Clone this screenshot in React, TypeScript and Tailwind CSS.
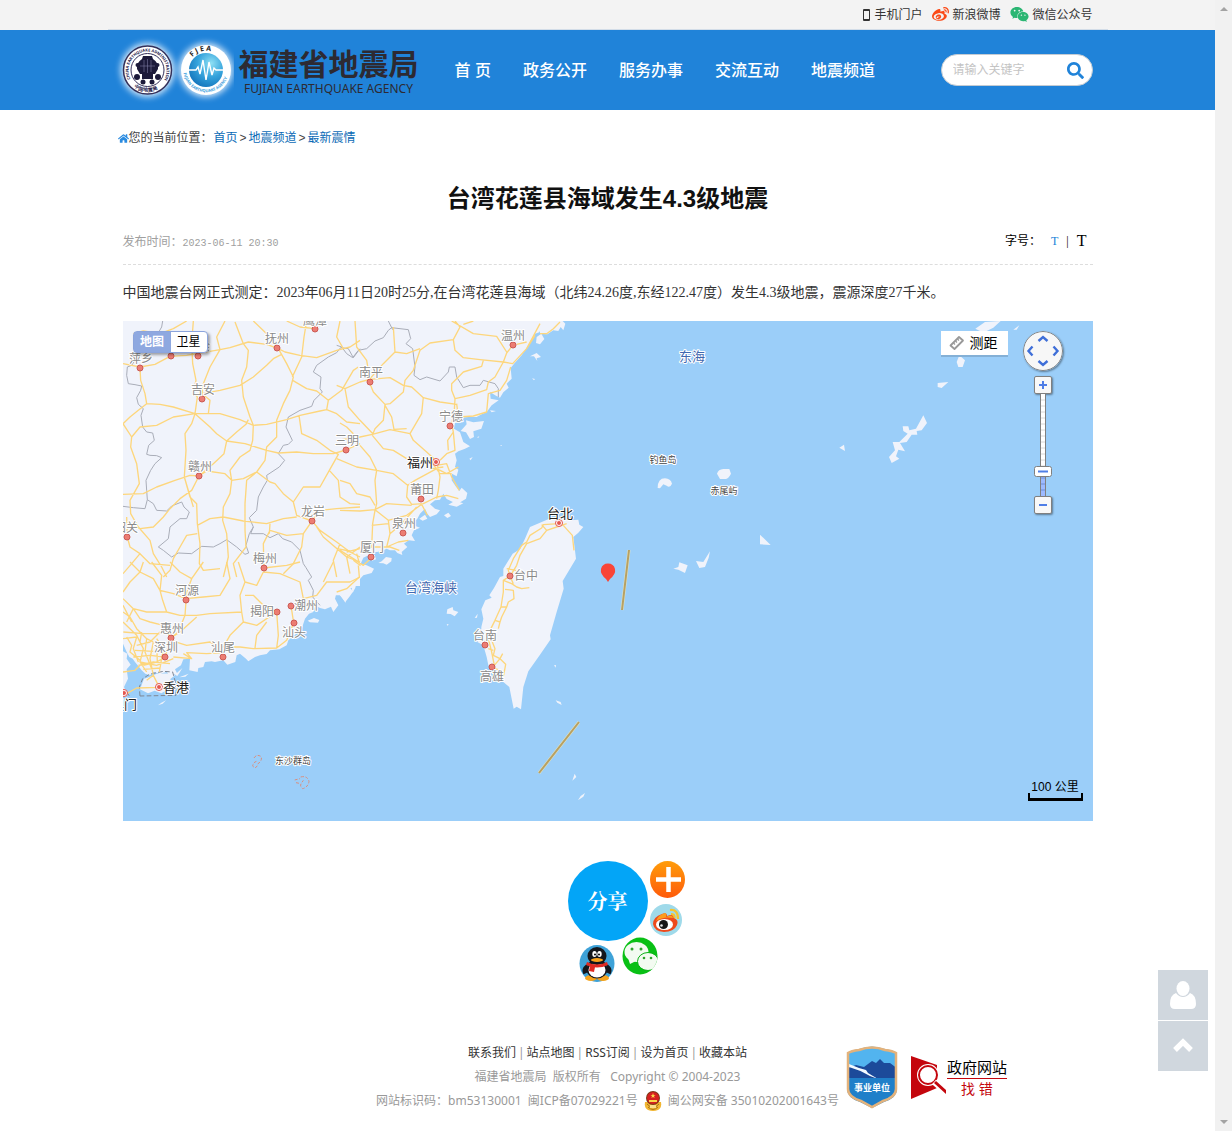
import { useState } from 'react';
import { FaHome, FaSearch, FaWeibo, FaWeixin } from 'react-icons/fa';
import { ChevronUp } from 'lucide-react';

const NAV = ['首 页', '政务公开', '服务办事', '交流互动', '地震频道'];
const FOOTER_LINKS = ['联系我们', '站点地图', 'RSS订阅', '设为首页', '收藏本站'];

// 地图图块：坐标为 3 倍精度，各自带偏移
const MAINLAND =
  'M0,12 L600,12 606,30 598,46 585,50 570,75 560,92 545,115 524,138 512,153 515,185 500,200 506,212 490,226 480,242 468,236 450,225 452,245 476,250 455,265 440,285 425,292 410,300 385,300 366,302 360,315 345,318 342,335 360,346 370,375 390,388 375,395 355,403 345,410 350,430 345,450 355,458 350,478 336,470 335,490 347,508 358,522 365,512 382,528 378,545 362,555 350,565 340,556 320,546 310,530 300,548 285,550 270,562 285,575 300,580 290,592 270,600 262,590 255,575 240,590 232,605 225,612 220,625 240,632 222,640 215,655 225,672 206,670 192,680 202,690 185,705 187,714 172,708 165,700 150,700 140,695 130,700 112,705 92,705 85,715 70,722 62,740 80,745 102,755 95,768 70,775 50,797 46,812 38,827 35,812 22,820 15,830 17,858 8,845 0,835 -651,835 -651,12Z';
const SOUTH_COAST =
  'M9,0 L720,0 720,72 702,72 690,78 700,88 690,102 676,120 665,105 650,90 645,110 655,130 640,150 633,134 615,142 600,138 585,130 580,150 567,155 555,170 550,185 545,202 525,218 505,235 500,250 478,262 450,265 440,276 420,280 405,285 385,298 378,290 360,275 350,280 346,300 322,308 310,295 285,300 275,298 255,300 250,315 235,318 233,330 208,325 210,290 190,292 183,310 165,322 172,335 150,340 140,330 120,335 100,330 90,340 76,335 65,325 55,312 45,300 38,290 28,285 20,270 9,245Z M9,268 L22,275 20,290 32,308 20,322 24,350 12,375 20,395 9,400Z M60,382 L72,350 88,345 110,335 150,334 165,340 150,352 165,362 178,375 140,385 124,394 104,386 84,394Z M165,338 L187,318 180,330 172,342Z M178,346 L206,335 196,344Z M114,430 L124,422 138,415 128,425Z M563,176 L582,168 598,174 594,182 570,181Z';
const TAIWAN =
  'M570,75 L600,62 640,45 690,55 715,53 718,68 730,75 715,92 700,105 708,170 690,200 668,237 671,260 650,330 630,400 632,412 600,458 565,508 550,555 543,622 530,614 521,620 515,590 508,555 490,540 470,505 445,490 440,465 430,430 412,420 424,405 424,375 430,350 424,322 436,295 455,287 448,280 462,258 480,225 490,222 490,200 518,155 540,142 555,110Z';
const STRAIT_ISLETS =
  'M115,183 L125,178 138,165 155,168 154,178 140,188 130,184Z M320,335 L322,322 338,315 340,325 355,330 344,343 332,336Z M404,348 L413,335 411,347Z M320,366 L326,367 323,372Z M642,490 L648,489 647,497Z M647,595 L662,600 665,609 652,602Z M697,836 L704,815 709,825Z M714,895 L722,882 735,873 730,884Z M325,8 L345,-4 370,4 350,14Z M312,40 L325,32 333,42 322,48Z M238,50 L255,38 262,50 248,56Z M92,162 L104,158 108,172 96,176Z';
const NORTH_ISLETS =
  'M570,118 L590,108 603,120 590,124 592,132 582,118Z M590,60 L604,50 613,66 600,82 588,78Z M600,50 L622,52 640,40 655,42 662,30 670,40 676,20 668,12 600,12Z M576,184 L585,186 582,190Z M362,342 L380,322 378,310 400,316 432,312 424,335 400,343 402,360 390,366 378,346Z M412,360 L418,358 414,364Z M480,384 L486,384 484,387Z M388,425 L398,420 392,430Z M450,280 L468,282 455,286Z';
const EAST_ISLETS =
  'M1006,35 L1035,15 1082,12 1060,32 1040,42 1020,42Z M1120,38 L1138,25 1130,38Z M958,115 L975,130 968,150 955,150 950,135Z M893,198 L925,195 905,213 893,210Z M850,295 L861,318 845,340 830,342 832,353 815,353 800,375 780,378 795,403 775,398 768,418 778,425 755,438 747,420 765,400 758,375 778,375 803,350 790,342 788,328 805,328 808,340 828,335Z M598,392 L612,383 615,402Z M231,470 Q235,457 250,456 L268,456 273,470 Q265,486 256,486 L240,486Z M53,513 Q53,484 75,484 Q92,485 96,500 Q90,514 80,506 L70,502 60,514Z M360,653 L392,684 360,682Z M210,703 L206,722 195,750 178,753 168,732 190,735Z M100,755 L115,750 118,736 143,745 135,768 115,758Z';

const ROADS_NW =
  'M9,140 L60,150 105,142 150,118 200,115 300,98 330,92 385,75 440,82 475,95 495,105 540,115 590,122 650,100 690,90 720,70 M60,153 L62,190 75,230 80,260 55,280 30,300 9,320 35,360 32,390 50,440 58,500 30,550 32,590 55,630 90,670 100,710 125,750 140,780 M80,260 L120,262 160,270 225,290 300,290 360,308 400,325 440,322 500,308 540,295 600,282 620,278 650,290 680,315 720,320 M225,290 L215,320 195,350 198,400 193,480 205,520 220,570 M225,290 L270,330 290,350 320,372 375,380 440,400 475,408 530,405 580,410 640,410 678,399 720,380 M225,290 L160,300 110,325 60,330 35,360 M40,50 L70,42 120,50 160,35 200,12 M220,12 L215,80 218,140 228,190 220,225 232,240 225,290 M315,12 L290,60 300,98 270,150 250,200 246,230 270,250 265,290 M345,15 L370,80 385,100 380,150 365,190 370,240 390,300 400,325 398,370 390,400 360,420 330,460 335,490 330,530 310,570 308,610 320,650 325,720 310,780 M385,308 L378,322 350,345 320,372 312,410 280,440 237,477 M246,230 L300,220 360,205 400,180 440,145 460,125 485,112 M475,95 L500,140 520,180 510,220 490,260 470,310 470,360 440,390 435,430 410,465 380,490 375,560 375,640 378,690 340,740 350,780 M518,190 L560,215 590,222 625,250 665,220 700,160 715,150 M625,250 L620,278 M237,477 L210,475 165,490 110,510 70,530 9,532 M237,477 L260,462 315,470 335,490 370,485 410,465 450,495 465,500 490,530 520,555 530,595 576,612 M237,477 L215,520 180,545 150,575 130,600 100,630 60,635 20,620 M193,480 L210,540 230,560 232,620 240,680 238,740 250,760 300,755 M232,625 L270,605 310,600 370,612 440,620 490,605 530,600 M232,650 L200,655 180,690 160,725 150,760 130,780 M20,600 L22,660 30,690 60,710 35,740 9,770 M60,710 L90,740 150,745 M576,612 L600,640 650,675 690,705 720,720 M576,612 L600,580 650,575 720,570 M537,295 L545,350 590,370 630,400 655,412 628,460 600,510 550,510 520,555 M628,460 L655,490 660,540 690,560 720,562 M576,612 L550,650 500,655 450,640 430,680 432,752 M450,620 L448,650 M550,650 L545,690 520,740 490,770 M590,630 L610,660 680,720 720,735 M720,690 L680,720 690,770 M650,780 L640,730 660,680 M560,12 L552,60 545,120 517,180 M500,12 L540,30 585,35 M660,12 L650,60 670,95 M400,12 L440,50 475,95';
const ROADS_N =
  'M45,12 L50,90 80,130 90,190 M-10,205 L15,215 60,195 90,187 150,182 190,205 215,210 250,242 300,255 350,262 M15,215 L25,270 60,310 100,352 M90,200 L100,225 135,262 130,310 105,335 97,355 M135,262 L150,260 190,225 195,190 220,160 240,100 270,78 340,68 360,30 345,12 M340,68 L345,100 370,122 420,128 490,135 518,140 560,95 600,20 M335,12 L400,50 470,58 500,105 M370,22 L400,12 M518,85 L500,108 490,135 465,180 445,195 440,218 390,235 345,245 335,220 335,200 370,165 425,148 430,130 M-10,370 L60,360 97,352 150,338 210,350 245,290 250,240 M345,245 L343,280 335,320 340,345 345,400 320,410 300,430 M340,345 L323,370 325,400 M350,260 L355,300 400,297 440,285 445,230 480,220 500,190 512,150 M97,355 L130,395 160,400 200,425 240,430 M210,350 L220,370 260,405 290,433 M-10,425 L50,450 110,460 160,470 203,505 225,490 290,455 320,470 355,450 M203,505 L200,540 215,562 250,560 290,540 320,535 355,545 M60,385 L90,420 110,460 105,490 110,560 105,580 98,620 95,690 M0,580 L60,582 105,578 140,560 215,565 M105,578 L145,610 200,595 245,562 262,595 M145,610 L150,650 140,690 175,675 205,670 M95,625 L145,620 M150,650 L180,625 230,570 M0,490 L30,500 50,530 90,540 105,565 M160,30 L165,105 130,140 90,185 M165,105 L200,110 240,95 M600,50 L620,50 640,35 660,15 M560,95 L585,55 M290,433 L300,480 295,520 290,545 M290,445 L320,440 335,480 358,520 M275,455 L310,450 M278,440 L300,470 335,470 M20,705 L60,695 95,690 120,690 150,690 178,700 M135,265 L155,300 162,337 200,335 M0,700 L40,725 70,745 95,722 M50,710 L60,745 40,730 M55,745 L58,780 20,815 -10,825 M-10,695 L30,702 M0,318 L20,330 40,350 M560,75 L530,82';
const ROADS_SW =
  'M70,0 L60,30 30,60 9,90 M60,30 L100,50 120,85 160,95 198,110 M95,0 L125,40 120,85 128,115 140,150 180,160 230,160 270,155 365,150 M250,0 L215,50 200,90 195,160 175,210 152,228 M320,0 L330,50 300,100 250,105 198,110 M9,110 L40,140 60,170 90,180 130,190 152,228 M9,150 L30,165 50,200 80,230 100,240 M20,180 L40,140 80,150 140,150 M9,180 L50,220 70,260 60,300 80,330 M152,228 L135,285 110,300 70,310 M9,230 L50,225 40,260 55,300 M152,228 L180,210 230,165 M152,235 L200,250 270,240 290,255 360,255 400,260 470,258 500,235 520,185 M160,285 L215,290 200,272 260,275 309,272 M215,290 L190,275 M365,150 L370,180 410,190 470,150 M370,180 L330,220 310,255 M365,150 L360,100 375,60 355,0 M375,60 L410,70 430,30 M375,100 L400,100 430,130 470,150 M430,30 L480,35 540,60 550,110 513,130 M440,180 L410,220 405,258 M470,150 L475,220 470,258 M430,18 L500,10 540,0 M550,110 L590,100 620,60 690,60 720,45 M640,0 L610,60 M513,130 L521,183 M100,240 L90,290 100,340 118,376 M20,395 L50,378 118,376 M60,300 L110,310 160,290 M120,210 L90,240 50,250 M110,230 L130,260 118,330 M80,230 L75,270 95,320 M20,225 L35,250 30,270 60,295 M40,285 L90,280 135,285 M55,310 L100,300 150,305 M100,340 L80,355 M10,210 L70,215 120,215 M65,210 L60,240 M70,322 L120,318 M110,240 L112,300 M9,330 L45,325 60,310 M45,265 L100,268 M9,130 L35,180 M30,0 L60,30 M150,0 L180,30 215,50';
const ROADS_TW =
  'M658,65 L610,68 605,78 570,100 560,120 545,130 520,170 505,205 510,222 490,235 490,270 483,315 465,355 450,385 M605,68 L620,85 650,75 680,65 M620,85 L600,110 560,125 540,160 530,190 515,215 M490,235 L515,245 530,255 545,260 568,257 M495,262 L520,265 522,290 505,300 500,315 483,315 M500,315 L485,345 480,360 465,355 M480,360 L475,380 M500,200 L528,205 M510,222 L520,245 M445,410 L455,450 463,490 M455,415 L465,440 460,460 480,470 488,455 M445,440 L460,445 M463,490 L480,470 497,487 490,525 M463,500 L485,505 M665,65 L697,100 702,145';

const BORDERS_NW =
  'M128,12 L125,30 118,42 M50,105 L45,130 35,145 22,150 20,175 25,200 45,203 65,207 62,220 50,242 55,262 70,275 63,295 68,330 80,345 98,348 103,370 86,385 80,412 90,415 110,416 125,422 105,440 92,460 78,490 80,520 82,548 100,560 110,580 140,582 155,567 185,555 192,570 208,585 200,605 180,605 150,630 145,665 115,690 130,700 155,720 175,708 215,710 245,688 280,690 300,680 320,668 350,690 375,712 386,708 378,685 388,650 400,630 M9,568 L40,572 75,575 82,548 M720,95 L700,122 685,95 662,92 650,107 625,120 590,145 580,165 603,180 600,215 607,225 582,250 575,268 540,280 505,300 498,330 517,370 505,382 490,385 475,410 494,430 478,450 440,475 442,490 430,510 415,540 410,580 388,602 400,630 392,650 430,650 450,662 475,650 488,665 515,675 540,700 550,740 558,752 575,780 565,790 580,820 578,840 600,865';
const BORDERS_N =
  'M-10,85 L5,90 20,110 38,122 55,100 80,95 105,72 130,62 145,40 155,32 205,38 212,65 198,80 218,95 225,150 222,175 240,188 260,180 300,192 325,165 328,150 345,150 350,180 370,212 390,205 420,205 430,190 465,200 475,215 475,240 M145,12 L158,38';

const CITIES: [string, number, number, number, number][] = [
  ['鹰潭', 315, 323, 315, 327],
  ['抚州', 277, 341, 277, 346],
  ['萍乡', 141, 361, 140, 366],
  ['新余', 198, 349, 198, 354],
  ['吉安', 203, 392, 202, 397],
  ['赣州', 200, 469, 199, 474],
  ['韶关', 126, 530, 127, 535],
  ['三明', 347, 443, 346, 448],
  ['龙岩', 313, 514, 312, 519],
  ['梅州', 265, 561, 264, 566],
  ['南平', 371, 375, 370, 380],
  ['温州', 513, 338, 513, 343],
  ['宁德', 451, 419, 450, 424],
  ['莆田', 422, 492, 421, 497],
  ['泉州', 404, 526, 403, 531],
  ['厦门', 372, 550, 371, 555],
  ['台中', 526, 578, 510, 574],
  ['台南', 485, 638, 485, 643],
  ['高雄', 492, 679, 492, 665],
  ['河源', 187, 593, 186, 598],
  ['惠州', 172, 631, 171, 636],
  ['深圳', 166, 650, 165, 655],
  ['揭阳', 262, 614, 277, 610],
  ['潮州', 306, 608, 291, 604],
  ['汕头', 294, 635, 294, 621],
  ['汕尾', 223, 650, 223, 655],
];

const CAPITALS: [string, number, number, number, number][] = [
  ['福州', 420, 465, 436, 460],
  ['台北', 560, 516, 559, 521],
  ['香港', 176, 690, 159, 685],
  ['澳门', 124, 707, 124, 691],
];

const SEAS: [string, number, number][] = [
  ['台湾海峡', 431, 590],
  ['东海', 692, 359],
];

const ISLANDS: [string, number, number][] = [
  ['东沙群岛', 293, 762],
  ['钓鱼岛', 663, 461],
  ['赤尾屿', 724, 492],
];

function MapCanvas() {
  return (
    <svg
      className="block h-full w-full font-['Noto_Sans_CJK_SC',sans-serif]"
      viewBox="123 319 970 500"
      preserveAspectRatio="xMidYMid slice"
      role="img"
      aria-label="震中位置地图"
    >
      <rect x="123" y="319" width="970" height="500" fill="#9bcef9" />
      <g transform="translate(120 315) scale(0.333333)" strokeLinejoin="round">
        <g fill="#f0f3fb">
          <path transform="translate(660 0)" d={MAINLAND} />
          <path transform="translate(0 735)" d={SOUTH_COAST} />
          <path transform="translate(660 555)" d={TAIWAN} />
          <path transform="translate(660 555)" d={STRAIT_ISLETS} />
          <path transform="translate(660 0)" d={NORTH_ISLETS} />
          <path transform="translate(1560 0)" d={EAST_ISLETS} />
        </g>
        <g fill="none" stroke="#a9adb8" strokeWidth="3">
          <path d={BORDERS_NW} />
          <path transform="translate(660 0)" d={BORDERS_N} />
          <path
            transform="translate(0 735)"
            stroke="#7f8794"
            strokeDasharray="14 7"
            d="M60,402 L58,375 68,350 90,336 130,328 158,330 166,360 168,400 Z M20,390 L30,405"
          />
        </g>
        <g fill="none" stroke="#fdd67c" strokeWidth="4">
          <path d={ROADS_NW} />
          <path transform="translate(660 0)" d={ROADS_N} />
          <path transform="translate(0 735)" d={ROADS_SW} />
          <path transform="translate(660 555)" d={ROADS_TW} />
        </g>
        <g transform="translate(0 735)" fill="none" stroke="#d98e7c" strokeWidth="3" strokeDasharray="9 5">
          <path d="M402,588 Q410,575 424,584 Q426,598 414,605 Q408,625 398,612 Q400,600 410,598" />
          <path d="M524,654 L540,650 M528,662 L538,664 M542,645 Q562,640 567,658 Q564,676 548,680 Q538,672 544,664 L550,655" />
        </g>
      </g>

      <path d="M629,548 L622,608 M579,720 L539,771" stroke="#dfe3c4" strokeWidth="3" />
      <path d="M629,548 L622,608 M579,720 L539,771" stroke="#b7a063" strokeWidth="2" />

      <circle cx="171" cy="354" r="3" fill="#ec7d73" stroke="#cb5a55" />
      {CITIES.map(([name, , , cx, cy]) => (
        <circle key={name} cx={cx} cy={cy} r="3" fill="#ec7d73" stroke="#cb5a55" />
      ))}
      {CAPITALS.map(([name, , , cx, cy]) => (
        <g key={name}>
          <circle cx={cx} cy={cy} r="3.500" fill="#fff" stroke="#e4574f" />
          <circle cx={cx} cy={cy} r="2" fill="#e4574f" />
        </g>
      ))}

      <g textAnchor="middle" stroke="#fff" strokeWidth="2" strokeLinejoin="round" paintOrder="stroke">
        <g fontSize="12" fill="#8a8a8a">
          {CITIES.map(([name, x, y]) => (
            <text key={name} x={x} y={y}>{name}</text>
          ))}
        </g>
        <g fontSize="13" fill="#222">
          {CAPITALS.map(([name, x, y]) => (
            <text key={name} x={x} y={y}>{name}</text>
          ))}
        </g>
        <g fontSize="13" fill="#3f68b0">
          {SEAS.map(([name, x, y]) => (
            <text key={name} x={x} y={y}>{name}</text>
          ))}
        </g>
        <g fontSize="9" fill="#444">
          {ISLANDS.map(([name, x, y]) => (
            <text key={name} x={x} y={y}>{name}</text>
          ))}
        </g>
      </g>

      {/* 震中 */}
      <path d="M608,580 L606,577 Q600,572 601,567 A7.2,7.2 0 0 1 615,567 Q616,572 610,577Z" fill="#f94538" />
    </svg>
  );
}

function QuakeMap() {
  const [zoom, setZoom] = useState(6);
  const zoomButton =
    'flex size-[18px] items-center justify-center rounded-xs border border-[#808080] bg-[#f8f8f8] shadow-[1px_1px_2px_rgba(0,0,0,0.4)]';

  return (
    <div className="relative h-[500px] w-full overflow-hidden">
      <MapCanvas />

      <div className="absolute top-[10px] left-[10px] flex h-[22px] rounded-sm border border-[#8ba4dc] bg-white text-xs leading-[18px] shadow-[2px_2px_3px_rgba(0,0,0,0.35)]">
        <button type="button" className="w-[37px] bg-[#8ea8e0] font-bold text-white">地图</button>
        <button type="button" className="w-9 text-black">卫星</button>
      </div>

      <button
        type="button"
        className="absolute top-[10px] right-[85px] flex h-6 items-center gap-[5px] bg-white pr-[10px] pl-2 text-sm text-black shadow-[0_2px_0_#84b0d6]"
      >
        <svg className="size-4" viewBox="0 0 16 16" fill="none" stroke="#999" strokeLinejoin="round">
          <path d="M1.500,10.500 L10,2 14,5.500 5.500,14Z" strokeWidth="1.800" />
          <path d="M4.500,8 L6,9.500 M6.500,6 L8,7.500 M8.500,4 L10,5.500" strokeWidth="1.200" />
        </svg>
        测距
      </button>

      <div className="absolute top-[10px] right-[30px] flex w-10 flex-col items-center">
        <svg className="size-10 rounded-full shadow-[1px_1px_2px_rgba(0,0,0,0.4)]" viewBox="0 0 40 40">
          <circle cx="20" cy="20" r="19.5" fill="#f7f7f7" stroke="#808080" />
          <path
            d="M15.5,10 L20,6 24.5,10 M15.5,30 L20,34 24.5,30 M9.500,15.500 L5.500,20 9.500,24.500 M30.500,15.500 L34.500,20 30.500,24.500"
            fill="none"
            stroke="#3f6fd8"
            strokeWidth="2.4"
          />
        </svg>
        <button type="button" aria-label="放大" className={`${zoomButton} mt-[5px]`} onClick={() => setZoom(zoom + 1)}>
          <svg className="size-2" viewBox="0 0 8 8">
            <path d="M0,4 H8 M4,0 V8" stroke="#4f7ee6" strokeWidth="2" />
          </svg>
        </button>
        <div className="relative flex h-[102px] w-[18px] justify-center">
          <svg className="h-full w-[6px]" viewBox="0 0 6 102">
            <rect width="6" height="102" fill="#808080" />
            <rect x="1" width="4" height="78" fill="#fff" />
            <rect x="1" y="78" width="4" height="24" fill="#9dbaff" />
            <path
              d="M1,6 H5 M1,12 H5 M1,18 H5 M1,24 H5 M1,30 H5 M1,36 H5 M1,42 H5 M1,48 H5 M1,54 H5 M1,60 H5 M1,66 H5 M1,72 H5"
              stroke="#d8d8d8"
            />
            <path d="M1,84 H5 M1,90 H5 M1,96 H5" stroke="#6f8fd8" />
          </svg>
          <svg className="absolute top-[72px] left-0 h-[11px] w-[18px]" viewBox="0 0 18 11">
            <rect x="0.5" y="0.5" width="17" height="10" rx="2" fill="#fff" stroke="#808080" />
            <path d="M4,5.500 H14" stroke="#4f7ee6" strokeWidth="2" />
          </svg>
          <input
            type="range"
            min={3}
            max={19}
            value={zoom}
            aria-label="缩放级别"
            onChange={(e) => setZoom(Number(e.target.value))}
            className="absolute inset-0 h-full w-full opacity-0 [direction:rtl] [writing-mode:vertical-lr]"
          />
        </div>
        <button type="button" aria-label="缩小" className={zoomButton} onClick={() => setZoom(zoom - 1)}>
          <svg className="size-2" viewBox="0 0 8 8">
            <path d="M0,4 H8" stroke="#4f7ee6" strokeWidth="2" />
          </svg>
        </button>
      </div>

      <div className="absolute right-[10px] bottom-5 flex w-[55px] flex-col items-center text-xs leading-3 text-black">
        100 公里
        <div className="h-2 w-full border-x-2 border-b-3 border-black" />
      </div>
    </div>
  );
}

function Emblems() {
  return (
    <svg className="h-[70px] w-[122px]" viewBox="112 35 122 70">
      <defs>
        <filter id="glow" x="-40%" y="-40%" width="180%" height="180%">
          <feGaussianBlur stdDeviation="3" />
        </filter>
        <path id="ringTop" d="M130.500,79 A19,19 0 1 1 164.500,79" />
        <path id="ringBottom" d="M134,87 A22,22 0 0 0 161,87" />
        <path id="fjTop" d="M189,62 A18.500,18.500 0 0 1 223,62" />
        <path id="fjBottom" d="M183.500,73 A22.800,22.800 0 0 0 228.500,73" />
        <radialGradient id="globe" cx="0.65" cy="0.3" r="0.8">
          <stop offset="0" stopColor="#8fe0f4" />
          <stop offset="0.5" stopColor="#35a3dc" />
          <stop offset="1" stopColor="#1170b8" />
        </radialGradient>
      </defs>
      <g fill="#fff" filter="url(#glow)" opacity="0.8">
        <circle cx="147.500" cy="70" r="27" />
        <circle cx="206" cy="70" r="27" />
      </g>
      <circle cx="147.500" cy="70" r="24" fill="#fff" stroke="#33305a" strokeWidth="1.500" />
      <circle cx="147.500" cy="70" r="16.500" fill="none" stroke="#33305a" strokeWidth="1" />
      <g fill="#26234e" className="font-['Noto_Sans',sans-serif]">
        <text fontSize="4" fontWeight="700">
          <textPath href="#ringTop">CHINA EARTHQUAKE ADMINISTRATION</textPath>
        </text>
        <text fontSize="5" fontWeight="700">
          <textPath href="#ringBottom">中国地震局</textPath>
        </text>
      </g>
      {/* 候风地动仪 */}
      <g fill="#1c1a3a">
        <path d="M143,56 H152 L153,59 Q159,63 158,69 L155,74 H140 L137,69 Q136,63 142,59Z" />
        <rect x="142" y="74" width="11" height="5" />
        <circle cx="137.500" cy="65" r="2" />
        <circle cx="157.500" cy="65" r="2" />
        <circle cx="137" cy="77" r="3" />
        <circle cx="158" cy="77" r="3" />
        <circle cx="143" cy="82" r="2.500" />
        <circle cx="152" cy="82" r="2.500" />
      </g>
      <path d="M144,60 V72 M147.500,59 V73 M151,60 V72 M140,66 H155" stroke="#8b88b0" strokeWidth="0.500" />
      <circle cx="206" cy="70" r="25" fill="#fff" />
      <circle cx="206" cy="70" r="17" fill="url(#globe)" />
      <path
        d="M188,70 H196 L198,67 200,74 203,60 206,80 209,62 212,75 214,68 216,70 H224"
        fill="none"
        stroke="#fff"
        strokeWidth="1.400"
      />
      <g className="font-['Noto_Sans',sans-serif]">
        <text fontSize="7" fontWeight="700" fill="#222">
          <textPath href="#fjTop" startOffset="6">F J E A</textPath>
        </text>
        <text fontSize="4" fontWeight="700" fill="#3b9ddb">
          <textPath href="#fjBottom">FUJIAN EARTHQUAKE AGENCY</textPath>
        </text>
      </g>
    </svg>
  );
}

function Header() {
  return (
    <header>
      <div className="bg-[#f3f3f3]">
        <div className="mx-auto flex h-[30px] max-w-[1000px] items-center justify-end gap-[10px] border-b border-[#d3dde8] pr-[15px] text-xs text-[#333]">
          <a href="#mobile" className="flex items-center gap-1">
            <svg className="h-3 w-[7px]" viewBox="0 0 7 12">
              <path d="M1,0 H6 Q7,0 7,1 V11 Q7,12 6,12 H1 Q0,12 0,11 V1 Q0,0 1,0Z M1,2 V10 H6 V2Z" fill="#333" fillRule="evenodd" />
            </svg>
            手机门户
          </a>
          <a href="#weibo" className="flex items-center gap-[3px]">
            <FaWeibo className="size-[17px] text-[#fb4a17]" />
            新浪微博
          </a>
          <a href="#weixin" className="flex items-center gap-[3px]">
            <FaWeixin className="size-[19px] text-[#2bb673]" />
            微信公众号
          </a>
        </div>
      </div>

      <div className="bg-[#2083d9]">
        <div className="mx-auto flex h-20 max-w-[1000px] items-center pr-[15px] pl-1">
          <a href="#home" className="flex shrink-0 items-center gap-[5px]">
            <Emblems />
            <span className="flex flex-col items-center pt-[2px] text-[#2d2a32]">
              <span className="text-[30px] leading-9 font-bold">福建省地震局</span>
              <span className="font-['Noto_Sans',sans-serif] text-xs leading-3">FUJIAN EARTHQUAKE AGENCY</span>
            </span>
          </a>
          <nav className="ml-9 flex gap-8 pt-[2px] text-base font-medium text-white">
            {NAV.map((item) => (
              <a key={item} href="#nav" className="whitespace-nowrap">{item}</a>
            ))}
          </nav>
          <form className="ml-auto flex h-8 w-[152px] items-center rounded-full border border-[#c3cbd3] bg-white pr-2 pl-[11px]">
            <input
              type="text"
              aria-label="搜索"
              placeholder="请输入关键字"
              className="min-w-0 flex-1 text-xs outline-none placeholder:text-[#c4c4c4]"
            />
            <button type="submit" aria-label="搜索">
              <FaSearch className="size-[17px] text-[#2083d9]" />
            </button>
          </form>
        </div>
      </div>
    </header>
  );
}

function ShareWheel() {
  return (
    <div className="relative mx-auto mt-10 size-20">
      <button
        type="button"
        className="size-20 rounded-full bg-[#03a5f7] font-['Noto_Serif_CJK_SC','Noto_Sans_CJK_SC',serif] text-xl font-bold text-white"
      >
        分享
      </button>

      <button type="button" aria-label="更多" className="absolute top-0 left-[82px]">
        <svg className="h-[37px] w-[35px]" viewBox="0 0 35 37">
          <defs>
            <linearGradient id="more" x1="0" y1="0" x2="0" y2="1">
              <stop offset="0" stopColor="#ff9d0a" />
              <stop offset="1" stopColor="#fe5a0a" />
            </linearGradient>
          </defs>
          <ellipse cx="17.500" cy="18.500" rx="17.500" ry="18.500" fill="url(#more)" />
          <path d="M6,18.500 H31 M18.500,6 V31" stroke="#fff" strokeWidth="4.500" />
        </svg>
      </button>

      <button type="button" aria-label="新浪微博" className="absolute top-[43px] left-[82px]">
        <svg className="size-8" viewBox="0 0 32 32">
          <circle cx="16" cy="16" r="16" fill="#9fdaea" />
          <path d="M3,20 Q3,13 12,10 Q17,8 17,12 Q24,9 24,14 Q29,16 27,21 Q24,28 14,28 Q4,27 3,20Z" fill="#ee4a1c" />
          <path d="M6,17 Q8,11 15,9 Q17,9 16,13 Q23,10 23,14 Q14,12 6,17Z" fill="#fb9d1e" />
          <ellipse cx="14.500" cy="20.500" rx="8.500" ry="5.500" fill="#fff" />
          <circle cx="13.500" cy="20.500" r="4.500" fill="#161616" />
          <circle cx="11.500" cy="21.500" r="1.300" fill="#e8e8e8" />
          <path d="M20,6 Q28,5 28,15 M21,10 Q25,10 24.500,14" fill="none" stroke="#f4c431" strokeWidth="2.200" />
        </svg>
      </button>

      <button type="button" aria-label="微信" className="absolute top-[76px] left-[54px]">
        <svg className="h-[38px] w-[36px]" viewBox="0 0 36 38">
          <defs>
            <clipPath id="wxClip">
              <ellipse cx="18" cy="19" rx="17.500" ry="18.500" />
            </clipPath>
          </defs>
          <ellipse cx="18" cy="19" rx="17.500" ry="18.500" fill="#09c015" />
          <g clipPath="url(#wxClip)" fill="#f3fbf1">
            <ellipse cx="14.500" cy="15" rx="12" ry="10" />
            <path d="M6,21 L8,27 14,24Z" />
            <ellipse cx="26" cy="24.500" rx="10.500" ry="9" stroke="#09b015" />
            <path d="M30,31 L34,35 33,29Z" />
            <g fill="#2da52c">
              <circle cx="10" cy="12" r="1.500" />
              <circle cx="19" cy="12" r="1.500" />
              <circle cx="22" cy="21" r="1.300" />
              <circle cx="29" cy="21" r="1.300" />
            </g>
          </g>
        </svg>
      </button>

      <button type="button" aria-label="QQ" className="absolute top-[84px] left-[11px]">
        <svg className="h-[37px] w-[36px]" viewBox="0 0 36 37">
          <ellipse cx="18" cy="18.500" rx="17.500" ry="18.500" fill="#3ea2d8" />
          <path d="M8,20 Q3,24 5,28 L9,26 M28,20 Q33,24 31,28 L27,26" fill="#14171c" stroke="#14171c" strokeWidth="2" />
          <ellipse cx="12" cy="33" rx="6" ry="3" fill="#f6a41c" />
          <ellipse cx="24" cy="33" rx="6" ry="3" fill="#f6a41c" />
          <ellipse cx="18" cy="24" rx="10.500" ry="9.500" fill="#14171c" />
          <ellipse cx="18" cy="25" rx="8.500" ry="7.500" fill="#fff" />
          <ellipse cx="18" cy="11" rx="9.500" ry="9" fill="#14171c" />
          <ellipse cx="15.500" cy="9" rx="2.200" ry="3" fill="#fff" />
          <ellipse cx="20.500" cy="9" rx="2.200" ry="3" fill="#fff" />
          <circle cx="16" cy="9.500" r="1" />
          <circle cx="20" cy="9.500" r="1" />
          <ellipse cx="18" cy="15" rx="6" ry="1.900" fill="#f9a21b" />
          <path d="M8,17 Q18,22 28,17 L29,20 Q18,25 7,20Z" fill="#e02a22" />
          <path d="M11,21 L16,22 15,27 10,26Z" fill="#e02a22" />
        </svg>
      </button>
    </div>
  );
}

function PoliceBadge() {
  return (
    <svg className="h-5 w-[18px]" viewBox="0 0 18 20">
      <path d="M1,11 Q0,17 4,19 Q9,21 14,19 Q18,17 17,11Z" fill="#f2b632" />
      <path d="M3,13 Q9,20 15,13 M4,16 Q9,21 14,16" fill="none" stroke="#a8741a" />
      <circle cx="9" cy="7" r="7" fill="#7b3a16" />
      <circle cx="9" cy="7" r="6" fill="#d6201f" />
      <path d="M9,2 L9.700,4 H11.500 L10,5 10.600,7 9,6 7.400,7 8,5 6.500,4 H8.300Z M5,9 H13 V11 H5Z" fill="#f9d648" />
      <rect x="6" y="14" width="6" height="3" fill="#fbe08b" />
    </svg>
  );
}

function InstitutionShield() {
  return (
    <svg className="h-16 w-[52px]" viewBox="0 0 52 64">
      <defs>
        <clipPath id="shield">
          <path d="M1,8 Q5,5 13,4 Q26,-1 39,4 Q47,5 51,8 V44 Q51,53 38,57 L26,63 14,57 Q1,53 1,44Z" />
        </clipPath>
      </defs>
      <g clipPath="url(#shield)">
        <rect width="52" height="34" fill="#52b4ef" />
        <path d="M0,24 L10,20 18,22 26,16 30,18 34,14 38,18 44,18 52,24 V34 H0Z" fill="#1c4a9a" />
        <path d="M3,19 Q12,23 20,25 L22,28 32,34 24,31 Q14,25 3,22Z" fill="#f5fbff" />
        <rect y="33" width="52" height="31" fill="#1f7fc9" />
      </g>
      <path
        d="M2,8 Q5,6 13,5 Q26,0 39,5 Q47,6 50,8 V44 Q50,52 37,56 L26,62 15,56 Q2,52 2,44Z"
        fill="none"
        stroke="#e3b27b"
        strokeWidth="2.500"
      />
      <text x="26" y="46" textAnchor="middle" fontSize="9" fontWeight="700" fill="#fff">事业单位</text>
    </svg>
  );
}

function Footer() {
  return (
    <footer className="mt-[100px] grid grid-cols-[1fr_auto_1fr] items-start font-['Noto_Sans','Noto_Sans_CJK_SC',sans-serif] text-xs leading-6 text-[#999]">
      <div className="col-start-2 flex flex-col items-center whitespace-nowrap">
        <p>
          {FOOTER_LINKS.map((link, i) => (
            <span key={link}>
              {i > 0 && <span className="px-[2px]">|</span>}
              <a href="#link" className="text-[#333]">{link}</a>
            </span>
          ))}
        </p>
        <p>福建省地震局&nbsp; 版权所有 &nbsp; Copyright © 2004-2023</p>
        <p className="flex items-center gap-[6px]">
          <span>网站标识码：bm53130001 &nbsp;闽ICP备07029221号</span>
          <PoliceBadge />
          <a href="#beian">闽公网安备 35010202001643号</a>
        </p>
      </div>
      <div className="flex items-center gap-3 pt-1 pl-[7px]">
        <a href="#institution" aria-label="事业单位">
          <InstitutionShield />
        </a>
        <a href="#report" className="flex items-center gap-px text-sm text-black">
          <svg className="h-11 w-9" viewBox="0 0 36 44">
            <path d="M1,1 L27,10 V33 L1,44Z" fill="#c4060d" />
            <circle cx="18" cy="20" r="11" fill="#fff" />
            <circle cx="18" cy="20" r="9" fill="none" stroke="#c4060d" strokeWidth="2" />
            <path d="M24,27 L38,39" stroke="#fff" strokeWidth="6" />
            <path d="M25,27 L37,38" stroke="#c4060d" strokeWidth="3" />
          </svg>
          <span className="flex flex-col items-center">
            <span className="border-b border-[#c4060d] text-[15px] leading-[22px]">政府网站</span>
            <span className="leading-5 text-[#c4060d]">找 错</span>
          </span>
        </a>
      </div>
    </footer>
  );
}

export default function App() {
  return (
    <div className="flex min-h-screen bg-white font-['Liberation_Sans','Noto_Sans_CJK_SC',sans-serif]">
      <div className="min-w-0 flex-1">
        <Header />

        <main className="mx-auto max-w-[1000px]">
          <div className="flex items-center px-[10px] pt-[18px] text-xs leading-5 text-[#444]">
            <FaHome className="size-[11px] text-[#2a8be0]" />
            <span>您的当前位置：</span>
            <a href="#home" className="pl-px text-[#0a6ab6]">首页</a>
            <span className="px-[2px]">&gt;</span>
            <a href="#channel" className="text-[#0a6ab6]">地震频道</a>
            <span className="px-[2px]">&gt;</span>
            <a href="#latest" className="text-[#0a6ab6]">最新震情</a>
          </div>

          <article className="px-[15px]">
            <h1 className="mt-[34px] text-center text-2xl leading-[34px] font-bold text-[#111]">台湾花莲县海域发生4.3级地震</h1>
            <div className="mt-[10px] flex items-center justify-between border-b border-dashed border-[#ddd] pb-2 font-['Liberation_Serif','Noto_Sans_CJK_SC',serif] text-xs leading-6">
              <p className="pt-1 text-[#a0a0a0]">
                发布时间：
                <time className="font-['Liberation_Mono',monospace] text-[10px]">2023-06-11 20:30</time>
              </p>
              <div className="flex items-center gap-2 pr-[6px] text-black">
                <span className="pr-[2px]">字号：</span>
                <button type="button" className="text-[#2083d9]">T</button>
                <span>|</span>
                <button type="button" className="text-base">T</button>
              </div>
            </div>
            <p className="my-[14px] font-['Liberation_Serif','Noto_Sans_CJK_SC',serif] text-sm leading-7 text-[#333]">
              中国地震台网正式测定：2023年06月11日20时25分,在台湾花莲县海域（北纬24.26度,东经122.47度）发生4.3级地震，震源深度27千米。
            </p>
            <QuakeMap />
          </article>

          <ShareWheel />
        </main>

        <Footer />
      </div>

      <div className="fixed right-6 bottom-[60px] flex flex-col gap-px">
        <button type="button" aria-label="个人中心" className="flex size-[50px] items-center justify-center bg-[#d0d7de]">
          <svg className="h-7 w-[26px]" viewBox="0 0 26 28" fill="#fff">
            <ellipse cx="13" cy="7.500" rx="6.500" ry="7.500" />
            <path d="M6,12 Q0,14 0,23 Q0,28 5,28 H21 Q26,28 26,23 Q26,14 20,12 Q17,16 13,16 Q9,16 6,12Z" />
          </svg>
        </button>
        <button type="button" aria-label="返回顶部" className="flex size-[50px] items-center justify-center bg-[#d0d7de]">
          <ChevronUp className="size-8 text-white" strokeWidth={4} strokeLinecap="butt" strokeLinejoin="miter" />
        </button>
      </div>

      <div className="flex w-[17px] shrink-0 flex-col items-center justify-between bg-[#f1f1f1] py-[7px]">
        <div className="border-x-4 border-b-4 border-x-transparent border-b-[#a3a3a3]" />
        <div className="border-x-4 border-t-4 border-x-transparent border-t-[#a3a3a3]" />
      </div>
    </div>
  );
}
